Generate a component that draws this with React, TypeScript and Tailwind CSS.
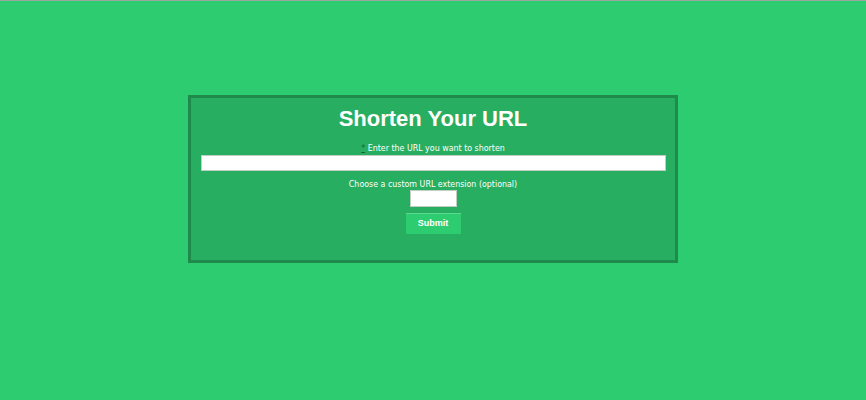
import React from 'react';

export default function App() {
  return (
    <div className="min-h-[400px] w-full bg-[#2ecc71] border-t border-[#9aa59f]">
      <div className="pt-[94px] flex justify-center">
        <div className="w-[490px] h-[168px] bg-[#27ae60] border-[3px] border-[#1e8a4c] flex flex-col items-center">
          <h1 className="mt-[5px] text-[22px] leading-[32px] font-bold text-white font-['Liberation_Sans',Arial,sans-serif]">
            Shorten Your URL
          </h1>
          <form className="w-full flex flex-col items-center font-['DejaVu_Sans_Condensed','DejaVu_Sans',Verdana,sans-serif] text-[8.8px] text-white">
            <label className="mt-[7px] leading-[12px]">
              <span className="underline text-[#1b5e35]">*</span> Enter the URL you want to shorten
            </label>
            <input type="text" className="mt-[1px] w-[465px] h-[16px] bg-white border border-[#bfcfc5] outline-none" />
            <label className="mt-[7px] leading-[12px]">Choose a custom URL extension (optional)</label>
            <input type="text" className="w-[47px] h-[17px] bg-white border border-[#bfcfc5] outline-none" />
            <button type="button" className="mt-[6px] w-[55px] h-[21px] bg-[#2ecc71] border-t border-[#5ad88f] text-white font-bold font-['Liberation_Sans',Arial,sans-serif] text-[9px]">
              Submit
            </button>
          </form>
        </div>
      </div>
    </div>
  );
}
